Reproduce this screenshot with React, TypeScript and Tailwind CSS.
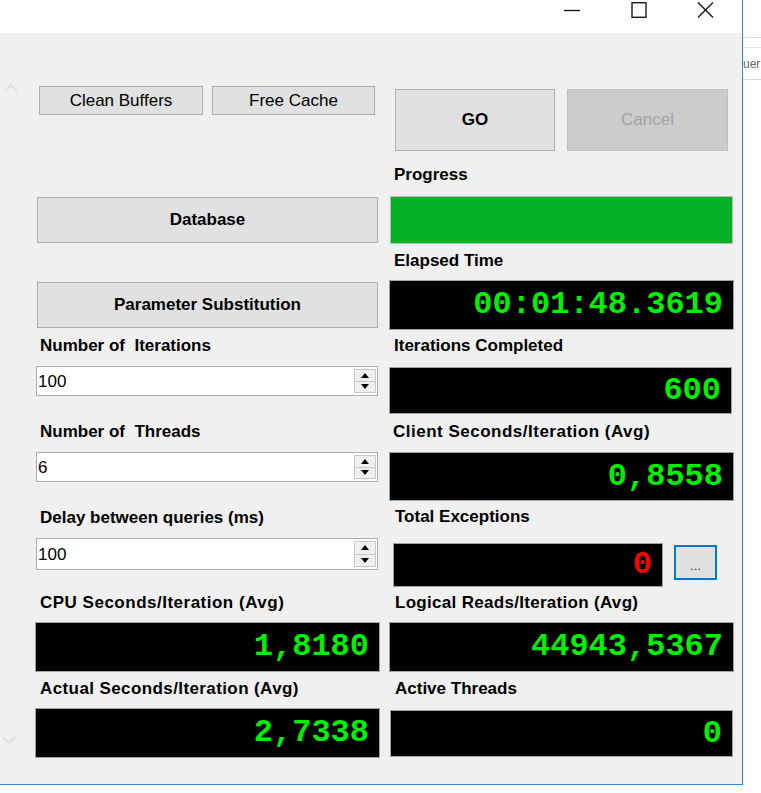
import React from "react";

function Label({ children, className = "" }: { children: React.ReactNode; className?: string }) {
  return (
    <div className={`h-[20px] leading-[20px] text-[17px] font-bold text-black whitespace-nowrap ${className}`}>
      {children}
    </div>
  );
}

function Display({
  value,
  className = "",
  red = false,
}: {
  value: string;
  className?: string;
  red?: boolean;
}) {
  return (
    <div
      className={`bg-black border border-[#a0a0a0] flex items-center justify-end pr-[10px] font-['Liberation_Mono',monospace] font-bold text-[32px] leading-none ${
        red ? "text-[#ff0000]" : "text-[#00f000]"
      } ${className}`}
    >
      {value}
    </div>
  );
}

function Spin({ value, className = "" }: { value: string; className?: string }) {
  return (
    <div className={`bg-white border border-[#adadad] flex items-center ${className}`}>
      <div className="flex-1 pl-[1px] text-[17px] leading-none text-black">{value}</div>
      <div className="w-[22px] mr-[1px] self-stretch my-[2px] flex flex-col border border-[#c8c8c8]">
        <div className="flex-1 bg-[#f0f0f0] border-b border-[#c8c8c8] flex items-center justify-center">
          <svg width="8" height="5" viewBox="0 0 8 5">
            <polygon points="4,0 8,5 0,5" fill="#000" />
          </svg>
        </div>
        <div className="flex-1 bg-[#f0f0f0] flex items-center justify-center">
          <svg width="8" height="5" viewBox="0 0 8 5">
            <polygon points="0,0 8,0 4,5" fill="#000" />
          </svg>
        </div>
      </div>
    </div>
  );
}

function Btn({ children, className = "" }: { children: React.ReactNode; className?: string }) {
  return (
    <div
      className={`bg-[#e1e1e1] border border-[#adadad] flex items-center justify-center text-[17px] text-black whitespace-nowrap ${className}`}
    >
      {children}
    </div>
  );
}

export default function App() {
  return (
    <div className="w-[761px] h-[793px] bg-white flex font-['Liberation_Sans',Arial,sans-serif] overflow-hidden">
      {/* Window */}
      <div className="w-[743px] h-[785px] border-r border-b border-[#2b88d8] flex flex-col shrink-0">
        {/* Title bar */}
        <div className="h-[33px] bg-white flex items-start pt-[2px] shrink-0">
          <div className="ml-[538px] flex">
            <div className="w-[67px] h-[16px] flex items-center justify-center">
              <svg width="18" height="16" viewBox="0 0 18 16">
                <line x1="1" y1="8.5" x2="17" y2="8.5" stroke="#1a1a1a" strokeWidth="1.4" />
              </svg>
            </div>
            <div className="w-[67px] h-[16px] flex items-center justify-center">
              <svg width="16" height="16" viewBox="0 0 16 16">
                <rect x="1" y="0.7" width="14" height="14.6" fill="none" stroke="#1a1a1a" strokeWidth="1.4" />
              </svg>
            </div>
            <div className="w-[67px] h-[16px] flex items-center justify-center">
              <svg width="17" height="16" viewBox="0 0 17 16">
                <line x1="1" y1="0.5" x2="16" y2="15.5" stroke="#1a1a1a" strokeWidth="1.4" />
                <line x1="16" y1="0.5" x2="1" y2="15.5" stroke="#1a1a1a" strokeWidth="1.4" />
              </svg>
            </div>
          </div>
        </div>

        {/* Body */}
        <div className="flex-1 bg-[#f0f0f0] flex">
          {/* Gutter */}
          <div className="w-[35px] flex flex-col shrink-0">
            <svg className="mt-[51px] ml-[4px]" width="14" height="8" viewBox="0 0 14 8">
              <polyline points="1,7 7,1 13,7" fill="none" stroke="#e0e0e0" strokeWidth="2" />
            </svg>
            <svg className="mt-auto mb-[40px] ml-[2px]" width="14" height="8" viewBox="0 0 14 8">
              <polyline points="1,1 7,7 13,1" fill="none" stroke="#e0e0e0" strokeWidth="2" />
            </svg>
          </div>

          {/* Left column */}
          <div className="w-[345px] flex flex-col shrink-0">
            <div className="mt-[53px] pl-[4px] flex gap-[9px]">
              <Btn className="w-[164px] h-[29px]">Clean Buffers</Btn>
              <Btn className="w-[163px] h-[29px]">Free Cache</Btn>
            </div>
            <Btn className="mt-[82px] ml-[2px] w-[341px] h-[46px] font-bold">Database</Btn>
            <Btn className="mt-[39px] ml-[2px] w-[341px] h-[46px] font-bold">Parameter Substitution</Btn>

            <Label className="mt-[8px] pl-[5px]">Number of&nbsp; Iterations</Label>
            <Spin value="100" className="mt-[10px] ml-[1px] w-[342px] h-[30px]" />

            <Label className="mt-[26px] pl-[5px]">Number of&nbsp; Threads</Label>
            <Spin value="6" className="mt-[10px] ml-[1px] w-[342px] h-[30px]" />

            <Label className="mt-[26px] pl-[5px]">Delay between queries (ms)</Label>
            <Spin value="100" className="mt-[10px] ml-[1px] w-[342px] h-[32px]" />

            <Label className="mt-[23px] pl-[5px] tracking-[0.5px]">CPU Seconds/Iteration (Avg)</Label>
            <Display value="1,8180" className="mt-[9px] w-[345px] h-[50px]" />

            <Label className="mt-[7px] pl-[5px] tracking-[0.4px]">Actual Seconds/Iteration (Avg)</Label>
            <Display value="2,7338" className="mt-[9px] w-[345px] h-[50px]" />
          </div>

          {/* Right column */}
          <div className="ml-[9px] w-[345px] flex flex-col shrink-0">
            <div className="mt-[56px] pl-[6px] flex gap-[12px]">
              <Btn className="w-[160px] h-[62px] font-bold">GO</Btn>
              <div className="w-[161px] h-[62px] bg-[#cccccc] border border-[#bfbfbf] flex items-center justify-center text-[17px] text-[#a3a3a3]">
                Cancel
              </div>
            </div>

            <Label className="mt-[14px] pl-[5px]">Progress</Label>
            <div className="mt-[11px] ml-[1px] w-[343px] h-[48px] bg-[#06b025] border border-[#bcbcbc]" />

            <Label className="mt-[7px] pl-[5px]">Elapsed Time</Label>
            <Display value="00:01:48.3619" className="mt-[9px] w-[345px] h-[50px]" />

            <Label className="mt-[6px] pl-[5px]">Iterations Completed</Label>
            <Display value="600" className="mt-[11px] w-[343px] h-[47px]" />

            <Label className="mt-[8px] pl-[4px] tracking-[0.5px]">Client Seconds/Iteration (Avg)</Label>
            <Display value="0,8558" className="mt-[10px] w-[345px] h-[49px]" />

            <Label className="mt-[6px] pl-[6px]">Total Exceptions</Label>
            <div className="mt-[16px] flex items-start">
              <Display value="0" red className="ml-[4px] w-[270px] h-[44px]" />
              <div className="ml-[11px] mt-[2px] w-[43px] h-[35px] bg-[#e1e1e1] border-2 border-[#0078d7] flex items-end justify-center pb-[6px] text-[13px] leading-none text-[#333]">
                ...
              </div>
            </div>

            <Label className="mt-[6px] pl-[6px] tracking-[0.3px]">Logical Reads/Iteration (Avg)</Label>
            <Display value="44943,5367" className="mt-[9px] w-[345px] h-[50px]" />

            <Label className="mt-[7px] pl-[6px]">Active Threads</Label>
            <Display value="0" className="mt-[11px] ml-[1px] w-[343px] h-[47px]" />
          </div>
        </div>
      </div>

      {/* Right strip (background window) */}
      <div className="flex-1 flex flex-col overflow-hidden">
        <div className="mt-[37px] h-px bg-[#dcdcdc]" />
        <div className="mt-[9px] h-px bg-[#e6e6e6]" />
        <div className="mt-[6px] h-[20px] leading-[20px] text-[12px] text-[#666] whitespace-nowrap">
          uer
        </div>
        <div className="mt-[5px] h-px bg-[#dcdcdc]" />
      </div>
    </div>
  );
}
